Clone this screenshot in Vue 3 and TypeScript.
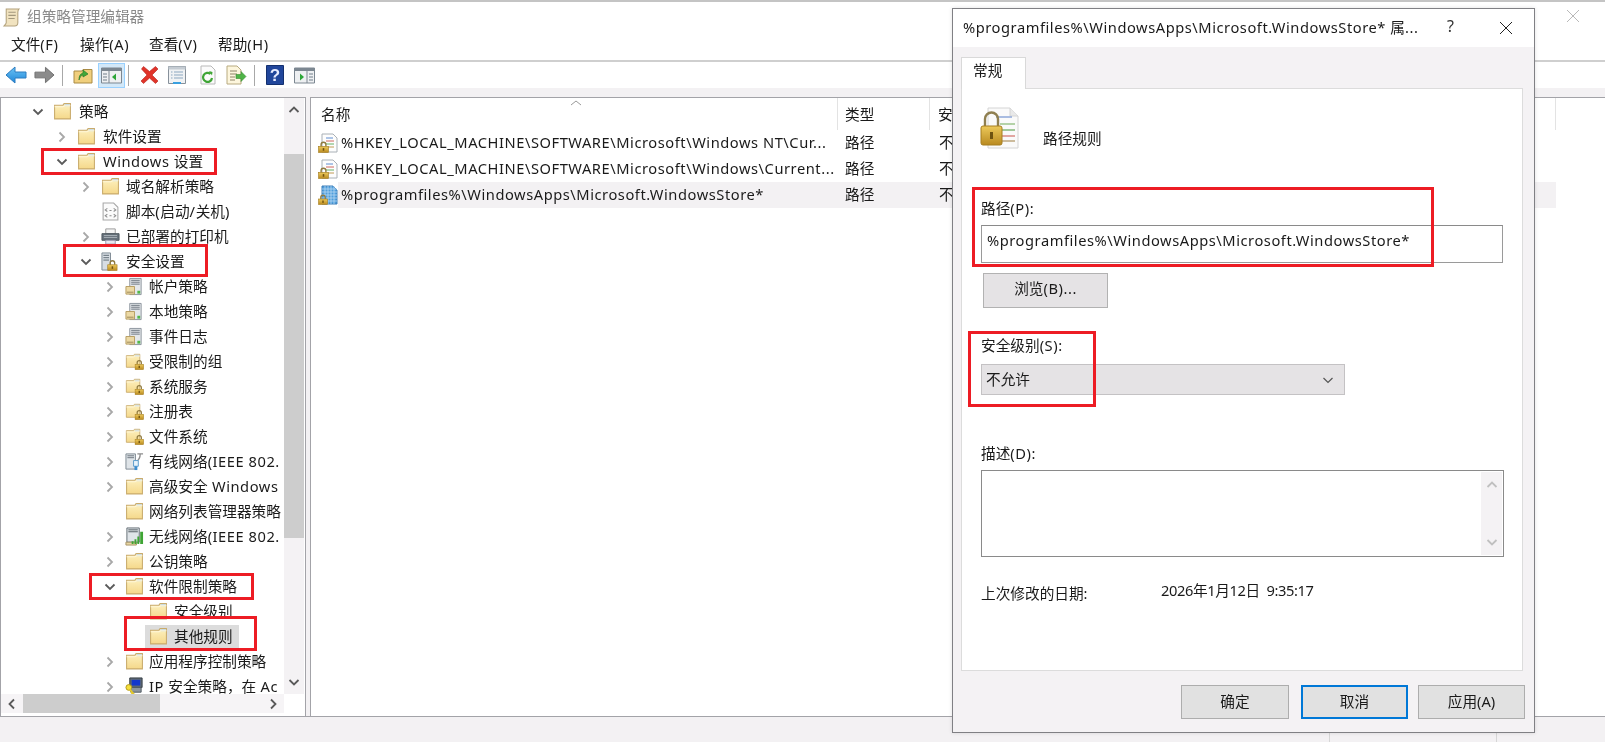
<script setup lang="ts">
interface Row { label: string; level: number; chev: 'r' | 'd' | ''; icon: string; selected?: boolean }
const tree: Row[] = [
  { label: '策略', level: 0, chev: 'd', icon: 'folder' },
  { label: '软件设置', level: 1, chev: 'r', icon: 'folder' },
  { label: 'Windows 设置', level: 1, chev: 'd', icon: 'folder' },
  { label: '域名解析策略', level: 2, chev: 'r', icon: 'folder' },
  { label: '脚本(启动/关机)', level: 2, chev: '', icon: 'script' },
  { label: '已部署的打印机', level: 2, chev: 'r', icon: 'printer' },
  { label: '安全设置', level: 2, chev: 'd', icon: 'seclock' },
  { label: '帐户策略', level: 3, chev: 'r', icon: 'server' },
  { label: '本地策略', level: 3, chev: 'r', icon: 'server' },
  { label: '事件日志', level: 3, chev: 'r', icon: 'server' },
  { label: '受限制的组', level: 3, chev: 'r', icon: 'folderlock' },
  { label: '系统服务', level: 3, chev: 'r', icon: 'folderlock' },
  { label: '注册表', level: 3, chev: 'r', icon: 'folderlock' },
  { label: '文件系统', level: 3, chev: 'r', icon: 'folderlock' },
  { label: '有线网络(IEEE 802.', level: 3, chev: 'r', icon: 'wired' },
  { label: '高级安全 Windows', level: 3, chev: 'r', icon: 'folder' },
  { label: '网络列表管理器策略', level: 3, chev: '', icon: 'folder' },
  { label: '无线网络(IEEE 802.', level: 3, chev: 'r', icon: 'wireless' },
  { label: '公钥策略', level: 3, chev: 'r', icon: 'folder' },
  { label: '软件限制策略', level: 3, chev: 'd', icon: 'folder' },
  { label: '安全级别', level: 4, chev: '', icon: 'folder' },
  { label: '其他规则', level: 4, chev: '', icon: 'folder', selected: true },
  { label: '应用程序控制策略', level: 3, chev: 'r', icon: 'folder' },
  { label: 'IP 安全策略，在 Ac', level: 3, chev: 'r', icon: 'ipsec' },
]
const rules = [
  { name: '%HKEY_LOCAL_MACHINE\\SOFTWARE\\Microsoft\\Windows NT\\Cur...', icon: 'doclock', hi: false },
  { name: '%HKEY_LOCAL_MACHINE\\SOFTWARE\\Microsoft\\Windows\\Current...', icon: 'doclock', hi: false },
  { name: '%programfiles%\\WindowsApps\\Microsoft.WindowsStore*', icon: 'gridlock', hi: true },
]
const menus = ['文件(F)', '操作(A)', '查看(V)', '帮助(H)']
const runs = (s: string) => (s.match(/[\x00-\x7f]+|[^\x00-\x7f]+/g) ?? []).map((t) => ({ t, lat: t.charCodeAt(0) < 128 }))
</script>

<template>
  <div class="root">
    <svg class="defs" width="0" height="0">
      <defs>
        <linearGradient id="fg" x1="0" y1="0" x2="0" y2="1"><stop offset="0" stop-color="#fdf1c0" /><stop offset="1" stop-color="#f5d88a" /></linearGradient>
        <linearGradient id="gold" x1="0" y1="0" x2="0" y2="1"><stop offset="0" stop-color="#edc95a" /><stop offset="1" stop-color="#b98a20" /></linearGradient>
        <linearGradient id="blue" x1="0" y1="0" x2="0" y2="1"><stop offset="0" stop-color="#6cc4f5" /><stop offset="1" stop-color="#1f86d8" /></linearGradient>
        <symbol id="folder" viewBox="0 0 18 18">
          <path d="M1.5 3h8l1-1.500h6v14.500h-15z" fill="url(#fg)" stroke="#c9ab6c" />
          <path d="M11 2h5v2h-5z" fill="#c5d9e6" />
          <path d="M1.500 4.500h8l1.500-1h5.500" fill="none" stroke="#fff6d8" />
        </symbol>
        <symbol id="lock" viewBox="0 0 10 11">
          <path d="M2.800 5V3.300a2.200 2.200 0 0 1 4.400 0V5" fill="none" stroke="#8f7a3f" stroke-width="1.300" />
          <rect x=".5" y="5" width="9" height="5.500" fill="url(#gold)" stroke="#a67e20" stroke-width=".6" />
          <rect x="4.300" y="6.500" width="1.400" height="2.400" fill="#6e5210" />
        </symbol>
        <symbol id="folderlock" viewBox="0 0 20 18">
          <use href="#folder" width="17" height="17" />
          <use href="#lock" x="10" y="7" width="10" height="11" />
        </symbol>
        <symbol id="server" viewBox="0 0 20 18">
          <path d="M5 .5h12v17H5z" fill="#e4e7ea" stroke="#8b949c" />
          <path d="M6.500 2.500h9M6.500 4.500h9M6.500 6.500h9" stroke="#69737c" />
          <path d="M1 9h9v8H1z" fill="#ecd9a4" stroke="#b69d62" />
          <path d="M2 15h7" stroke="#9a8655" />
          <rect x="13" y="13.500" width="3" height="3" fill="#52b848" />
        </symbol>
        <symbol id="seclock" viewBox="0 0 20 20">
          <path d="M1 1h9v18H1z" fill="#d7dde3" stroke="#7e8992" />
          <path d="M2.500 3.500h6M2.500 6h6M2.500 8.500h6" stroke="#5d6973" />
          <use href="#lock" x="6" y="8" width="12" height="12" />
        </symbol>
        <symbol id="script" viewBox="0 0 18 18">
          <path d="M2 1h10l4 4v12H2z" fill="#fbfbfb" stroke="#a8a8a8" />
          <path d="M6 6 4 7.500 6 9M12 6l2 1.500L12 9M6 11.500 4 13l2 1.500M12 11.500l2 1.500-2 1.500M8 8h2M8 13h2" fill="none" stroke="#8d8d8d" />
        </symbol>
        <symbol id="printer" viewBox="0 0 20 18">
          <path d="M5 1h10v5H5z" fill="#f4f4f4" stroke="#9a9a9a" />
          <path d="M1 6h18v7H1z" fill="#66707a" stroke="#4f5860" />
          <path d="M3 8h14M3 10h14" stroke="#aab2b9" />
          <path d="M5 13h10v4H5z" fill="#e8e8f0" stroke="#9a9ab0" />
        </symbol>
        <symbol id="wired" viewBox="0 0 20 20">
          <path d="M1 2h10v16H1z" fill="#dfe4e8" stroke="#7e8992" />
          <path d="M2.500 4h7M2.500 6h7" stroke="#69737c" />
          <path d="M13 2h6M16 2c0 3-1 6-4 8" fill="none" stroke="#8d8d8d" stroke-width="1.400" />
          <path d="M9 9h5v6H9z" fill="#e8f3fb" stroke="#5a9bcb" />
          <rect x="10" y="15" width="3" height="4" fill="#3d8ed0" />
        </symbol>
        <symbol id="wireless" viewBox="0 0 20 20">
          <path d="M2 1h13v15H2z" fill="#dfe4e8" stroke="#626b73" />
          <path d="M3.500 3h10M3.500 5h10" stroke="#4f5860" />
          <path d="M1 16h11v3H1z" fill="#e8d6a2" stroke="#a69466" />
          <path d="M7 18h2v-3H7zM10 18h2v-5h-2zM13 18h2v-8h-2zM16 18h3V5h-3z" fill="#3fa535" />
        </symbol>
        <symbol id="ipsec" viewBox="0 0 20 20">
          <path d="M5 1h13v10H5z" fill="#5e6a75" stroke="#333b42" />
          <path d="M7 3h9v6H7z" fill="#1337cc" />
          <path d="M6 11h11v5H6z" fill="#8d969e" stroke="#4f5860" />
          <circle cx="4" cy="11" r="3" fill="#f5df3c" stroke="#b3991d" />
          <path d="m5 13 5 6M8 16l-1.500 1.500" stroke="#e3c82a" stroke-width="2" fill="none" />
        </symbol>
        <symbol id="doclock" viewBox="0 0 20 20">
          <path d="M4 1h11l4 4v14H4z" fill="#fdfdfd" stroke="#a9b0b6" />
          <path d="M8 5h7" stroke="#5f8cd0" /><path d="M8 8h8" stroke="#d0685f" /><path d="M8 11h8" stroke="#66b066" /><path d="M10 14h6" stroke="#c29a55" />
          <use href="#lock" x="0" y="8" width="11" height="12" />
        </symbol>
        <symbol id="gridlock" viewBox="0 0 20 20">
          <path d="M4 1h11l4 4v14H4z" fill="#4f9edc" stroke="#3f7fb8" />
          <path d="M4 4h15M4 7h15M4 10h15M4 13h15M4 16h15M7 1v18M10 1v18M13 1v18M16 1v18" stroke="#b7d8f2" stroke-width=".8" />
          <use href="#lock" x="0" y="9" width="10" height="11" />
        </symbol>
      </defs>
    </svg>

    <div class="titlebar">
      <svg class="t-icon" viewBox="0 0 18 18">
        <path d="M4 1h12c-1 1-1 2-1 3v10c0 2-1 3-3 3H2c1-1 2-2 2-3z" fill="#f1e3c0" stroke="#b3a27c" />
        <path d="M6 4h7M6 7h7M6 10h6" stroke="#a3987d" />
      </svg>
      <span class="t-text">组策略管理编辑器</span>
    </div>
    <div class="menubar">
      <span v-for="m in menus" :key="m" class="menu">
        <span v-for="(p, i) in runs(m)" :key="i" :class="{ lat: p.lat }">{{ p.t }}</span>
      </span>
    </div>
    <div class="toolbar">
      <svg class="tb a" viewBox="0 0 22 18"><path d="M1 9 10 1v5h11v6H10v5z" fill="url(#blue)" stroke="#2d7cc0" /></svg>
      <svg class="tb b" viewBox="0 0 22 18"><path d="M21 9 12 1v5H1v6h11v5z" fill="#8b8b8b" stroke="#6f6f6f" /></svg>
      <i class="sep c" />
      <svg class="tb d" viewBox="0 0 20 20"><path d="M1 6h8l1-1.500h9V18H1z" fill="#f0cf7d" stroke="#a98a45" /><path d="M6 15c0-4 1-6 4-7V5l5 4-5 3V10c-2 .5-3 2-4 5z" fill="#41a83a" stroke="#2f7d2a" stroke-width=".7" /></svg>
      <span class="tb-active">
        <svg viewBox="0 0 21 18"><path d="M.5 2h20v15H.5z" fill="#eef0f2" stroke="#7c8791" /><path d="M.5 2h20v3H.5z" fill="#7c8791" /><path d="M8 5v12" stroke="#7c8791" /><path d="M2 8h4M2 11h4M2 14h4" stroke="#9aa4ad" stroke-width="1.500" /><path d="m15 7.500-4 3.500 4 3.500z" fill="#2da638" /></svg>
      </span>
      <i class="sep e" />
      <svg class="tb f" viewBox="0 0 20 20"><path d="m2 4 2-2.500 6 5 6-5 2.500 2.500-6 6 6 6-2.500 2.500-6-5.500-6 5.500L1.500 16l6-6z" fill="#e0342a" stroke="#b51f18" stroke-width=".6" /></svg>
      <svg class="tb g" viewBox="0 0 20 20"><path d="M1.500 1.500h17v17h-17z" fill="#f0f2f4" stroke="#87919b" /><path d="M1.500 1.500h17v3h-17z" fill="#c5ccd3" /><path d="M7 7h9M7 10h9M7 13h9M4 7h1.500M4 10h1.500M4 13h1.500" stroke="#8ba7c0" /><path d="M6 18h8" stroke="#3aa0df" stroke-width="2" /></svg>
      <svg class="tb h" viewBox="0 0 18 20"><path d="M2 1h10l4 4v14H2z" fill="#fbfbfb" stroke="#b9b9b9" /><path d="M13 13a4.500 4.500 0 1 1-1.500-4" fill="none" stroke="#3fa535" stroke-width="2.200" /><path d="m10 6 3.500 1-.5 3.500z" fill="#3fa535" /></svg>
      <svg class="tb i" viewBox="0 0 22 20"><path d="M2 1h10l4 4v14H2z" fill="#fdf6dd" stroke="#b8aa80" /><path d="M5 6h7M5 9h7M5 12h5M5 15h5" stroke="#8f8468" /><path d="M11 9.500h5V6.500l5 5-5 5v-3h-5z" fill="#4fb447" stroke="#3a8a34" stroke-width=".6" /></svg>
      <i class="sep j" />
      <svg class="tb k" viewBox="0 0 18 20"><path d="M.5.500h17v19H.5z" fill="#21469b" stroke="#14306f" /><text x="9" y="16" text-anchor="middle" class="q">?</text></svg>
      <svg class="tb l" viewBox="0 0 21 18"><path d="M.5 2h20v15H.5z" fill="#eef0f2" stroke="#7c8791" /><path d="M.5 2h20v3H.5z" fill="#7c8791" /><path d="M13 5v12" stroke="#7c8791" /><path d="M15 8h4M15 11h4M15 14h4" stroke="#9aa4ad" stroke-width="1.500" /><path d="m6 7.500 4 3.500-4 3.500z" fill="#2da638" /></svg>
    </div>

    <div class="content">
      <div class="left">
        <div class="left-top">
          <div class="tree">
            <div v-for="r in tree" :key="r.label" class="row" :class="'lv' + r.level">
              <span class="chev">
                <svg v-if="r.chev === 'd'" viewBox="0 0 12 12"><path d="m1.500 3.500 4.500 4.500 4.500-4.500" class="c-dark" /></svg>
                <svg v-else-if="r.chev === 'r'" viewBox="0 0 12 12"><path d="m3.500 1.500 4.500 4.500-4.500 4.500" class="c-light" /></svg>
              </span>
              <span class="item" :class="{ sel: r.selected }">
                <svg class="ic"><use :href="'#' + r.icon" /></svg>
                <span class="lab"><span v-for="(p, i) in runs(r.label)" :key="i" :class="{ lat: p.lat }">{{ p.t }}</span></span>
              </span>
            </div>
          </div>
          <div class="vscroll">
            <span class="sb-btn"><svg viewBox="0 0 12 12"><path d="m1.500 8 4.500-4.500 4.500 4.500" class="c-dark" /></svg></span>
            <span class="v-thumb" />
            <span class="grow" />
            <span class="sb-btn"><svg viewBox="0 0 12 12"><path d="m1.500 4 4.500 4.500 4.500-4.500" class="c-dark" /></svg></span>
          </div>
        </div>
        <div class="hscroll">
          <span class="h-btn"><svg viewBox="0 0 12 12"><path d="m8 1.500-4.500 4.500 4.500 4.500" class="c-dark" /></svg></span>
          <span class="h-thumb" />
          <span class="grow" />
          <span class="h-btn"><svg viewBox="0 0 12 12"><path d="m4 1.500 4.500 4.500-4.500 4.500" class="c-dark" /></svg></span>
        </div>
      </div>

      <div class="right">
        <div class="r-head">
          <span class="col col1">名称
            <svg class="caret" viewBox="0 0 12 6"><path d="m1 5 5-4 5 4" fill="none" stroke="#9a9a9a" /></svg>
          </span>
          <span class="col col2">类型</span>
          <span class="col col3">安</span>
        </div>
        <div v-for="r in rules" :key="r.name" class="r-row">
          <svg class="ric"><use :href="'#' + r.icon" /></svg>
          <div class="r-cells" :class="{ hi: r.hi }">
            <span class="cell c1 lat">{{ r.name }}</span>
            <span class="cell c2">路径</span>
            <span class="cell c3">不</span>
          </div>
        </div>
      </div>
    </div>

    <div class="status">
      <span class="s1" /><span class="s2" /><span class="s3" />
    </div>

    <svg class="bg-x" viewBox="0 0 14 14"><path d="m1 1 12 12M13 1 1 13" stroke="#b9b9b9" fill="none" /></svg>

    <div class="dialog">
      <div class="d-title">
        <span class="d-t-text"><span class="lat">%programfiles%\WindowsApps\Microsoft.WindowsStore* </span>属<span class="lat">...</span></span>
        <span class="d-help">?</span>
        <svg class="d-x" viewBox="0 0 14 14"><path d="m1 1 12 12M13 1 1 13" stroke="#222" fill="none" /></svg>
      </div>
      <div class="d-tabs"><span class="d-tab">常规</span></div>
      <div class="d-panel">
        <div class="d-head">
          <svg class="d-ic" viewBox="0 0 40 42">
            <path d="M8 1h22l8 8v32H8z" fill="#fafafa" stroke="#d4d4d4" />
            <path d="M30 1v8h8" fill="#e9e9e9" stroke="#d4d4d4" />
            <path d="M16 10h16" stroke="#8ea7d8" stroke-width="1.500" />
            <path d="M20 17h15" stroke="#9cc48c" stroke-width="1.500" />
            <path d="M20 23h15" stroke="#84b77a" stroke-width="1.500" />
            <path d="M20 29h15" stroke="#d98a84" stroke-width="1.500" />
            <path d="M20 34h15" stroke="#bda67c" stroke-width="1.500" />
            <path d="M5 20v-8a6.500 6.500 0 0 1 13 0v8" fill="none" stroke="#8f7f50" stroke-width="2.400" />
            <rect x="1" y="19" width="21" height="19" rx="2" fill="url(#gold)" stroke="#a67e20" />
            <rect x="10" y="25" width="3" height="7" fill="#6e5210" />
          </svg>
          <span class="d-h-text">路径规则</span>
        </div>
        <label class="lb l1">路径<span class="lat">(P):</span></label>
        <div class="input lat">%programfiles%\WindowsApps\Microsoft.WindowsStore*</div>
        <div class="btn browse"><span>浏览<span class="lat">(B)...</span></span></div>
        <label class="lb l2">安全级别<span class="lat">(S):</span></label>
        <div class="select">
          <span class="s-text">不允许</span>
          <svg viewBox="0 0 12 12"><path d="m1.500 4 4.500 4.500 4.500-4.500" fill="none" stroke="#555" stroke-width="1.200" /></svg>
        </div>
        <label class="lb l3">描述<span class="lat">(D):</span></label>
        <div class="textarea">
          <div class="ta-sb">
            <svg viewBox="0 0 12 12"><path d="m1.500 8 4.500-4.500 4.500 4.500" fill="none" stroke="#c0c0c0" stroke-width="1.800" /></svg>
            <svg viewBox="0 0 12 12"><path d="m1.500 4 4.500 4.500 4.500-4.500" fill="none" stroke="#c0c0c0" stroke-width="1.800" /></svg>
          </div>
        </div>
        <div class="date"><span class="date-l">上次修改的日期:</span><span class="date-v">2026年1月12日&nbsp;&nbsp;9:35:17</span></div>
      </div>
      <div class="d-foot">
        <span class="btn fbtn">确定</span>
        <span class="btn fbtn cancel">取消</span>
        <span class="btn fbtn apply">应用(A)</span>
      </div>
    </div>

    <i class="red ra" /><i class="red rb" /><i class="red rc" /><i class="red rd" /><i class="red re" /><i class="red rf" />
  </div>
</template>

<style>
html, body { margin: 0; background: #fff; overflow: hidden; }
</style>

<style scoped>
.root {
  position: relative; width: 1605px; height: 742px; overflow: hidden; background: #fff; color: #1a1a1a;
  display: flex; flex-direction: column; box-sizing: border-box; border-top: 2px solid #c4c4c4;
  font: 14.67px/20px "Noto Sans", "Noto Sans CJK SC", sans-serif;
  filter: blur(0.35px);
}
.lat { letter-spacing: 0.55px; }
.defs { position: absolute; }
.titlebar { height: 31px; display: flex; align-items: center; padding-left: 2px; }
.t-icon { width: 19px; height: 19px; margin-right: 6px; }
.t-text { color: #8a8a8a; padding-bottom: 4px; }
.menubar { height: 27px; display: flex; align-items: center; padding-left: 11px; border-bottom: 2px solid #cfcfcf; box-sizing: content-box; }
.menu { width: 69px; padding-bottom: 5px; }
.toolbar { height: 26px; position: relative; flex: none; display: flex; align-items: center; }
.tb { flex: none; height: 20px; }
.a { width: 22px; margin-left: 5px; }
.b { width: 21px; margin-left: 7px; }
.sep { flex: none; width: 1px; height: 21px; background: #a8a8a8; }
.c { margin-left: 7px; }
.d { width: 20px; margin-left: 10px; }
.tb-active { flex: none; width: 27px; height: 25px; margin-left: 5px; background: #d3e8f8; border: 1px solid #99d1ff; box-sizing: border-box; display: flex; align-items: center; justify-content: center; }
.tb-active svg { width: 21px; height: 18px; }
.e { margin-left: 3px; }
.f { width: 21px; margin-left: 10px; }
.g { width: 20px; margin-left: 7px; }
.h { width: 18px; margin-left: 12px; }
.i { width: 22px; margin-left: 8px; }
.j { margin-left: 7px; }
.k { width: 18px; margin-left: 11px; }
.l { width: 21px; margin-left: 10px; height: 18px; }
.q { font: bold 17px "Liberation Sans", sans-serif; fill: #e8ecff; }

.content { flex: 1; min-height: 0; display: flex; gap: 4px; background: #f3f1f3; padding-top: 9px; }
.left { width: 306px; flex: none; box-sizing: border-box; background: #fff; border: 1px solid #a3a3a8; border-bottom: 0; display: flex; flex-direction: column; }
.left-top { height: 596px; display: flex; flex: none; }
.tree { width: 283px; flex: none; overflow: hidden; padding-top: 1px; box-sizing: border-box; }
.row { height: 25px; display: flex; align-items: center; white-space: nowrap; }
.lv0 { padding-left: 29px; }
.lv1 { padding-left: 53px; }
.lv2 { padding-left: 77px; }
.lv3 { padding-left: 101px; }
.lv4 { padding-left: 125px; }
.chev { width: 23px; flex: none; display: flex; align-items: center; padding-left: 2px; box-sizing: border-box; }
.chev svg { width: 12px; height: 12px; }
.c-dark { fill: none; stroke: #5a5a5a; stroke-width: 1.800; }
.c-light { fill: none; stroke: #a8a8a8; stroke-width: 1.800; }
.item { display: flex; align-items: center; height: 24px; padding-right: 6px; }
.item.sel { background: #dcdcdc; margin-left: -4px; padding-left: 4px; }
.ic { width: 19px; height: 19px; flex: none; margin-right: 7px; }
.lv2 .ic, .lv4 .ic { margin-right: 6px; }
.lv3 .ic { margin-right: 5px; }
.lab { padding-bottom: 2px; }
.vscroll { width: 20px; background: #f4f2f4; display: flex; flex-direction: column; }
.sb-btn { height: 24px; flex: none; display: flex; align-items: center; justify-content: center; }
.sb-btn svg { width: 12px; height: 12px; }
.v-thumb { height: 384px; flex: none; margin-top: 32px; background: #cdcdcd; }
.grow { flex: 1; }
.hscroll { height: 19px; width: 283px; flex: none; display: flex; align-items: center; background: #f6f4f6; }
.h-btn { width: 22px; flex: none; display: flex; justify-content: center; }
.h-btn svg { width: 12px; height: 12px; }
.h-thumb { width: 137px; height: 19px; background: #cdcdcd; }

.right { flex: 1; background: #fff; border: 1px solid #a3a3a8; border-width: 1px 0 0 1px; }
.r-head { height: 32px; display: flex; align-items: center; }
.col { height: 100%; display: flex; align-items: center; box-sizing: border-box; border-right: 1px solid #e3e3e3; padding-left: 10px; position: relative; }
.col1 { width: 527px; }
.col2 { width: 92px; padding-left: 7px; }
.col3 { width: 626px; padding-left: 8px; }
.caret { position: absolute; left: 259px; top: 2px; width: 12px; height: 6px; }
.r-row { height: 26px; display: flex; align-items: center; padding-left: 7px; }
.ric { width: 20px; height: 20px; flex: none; }
.r-cells { flex: 1; display: flex; height: 100%; align-items: center; padding-left: 3px; }
.r-cells.hi { background: #f3f1f3; margin-right: 49px; }
.cell { white-space: nowrap; overflow: hidden; flex: none; padding-bottom: 2px; }
.c1 { width: 504px; }
.c2 { width: 94px; }

.status { height: 26px; flex: none; display: flex; background: #f3f1f3; border-top: 1px solid #a3a3a8; box-sizing: border-box; }
.s1 { width: 1329px; flex: none; }
.s2 { width: 166px; flex: none; border-left: 1px solid #d6d6d6; }
.s3 { flex: 1; border-left: 1px solid #d6d6d6; }
.bg-x { position: absolute; left: 1566px; top: 7px; width: 14px; height: 14px; }

.dialog { position: absolute; left: 952px; top: 6px; width: 583px; height: 725px; box-sizing: border-box; background: #f4f2f4; border: 1px solid #808084; display: flex; flex-direction: column; box-shadow: 0 0 4px rgba(0,0,0,.12); }
.d-title { height: 38px; flex: none; background: #fff; display: flex; align-items: center; padding-left: 10px; }
.d-t-text { width: 484px; white-space: nowrap; overflow: hidden; padding-bottom: 2px; box-sizing: border-box; }
.d-help { width: 52px; font-size: 16px; color: #333; padding-bottom: 4px; }
.d-x { width: 14px; height: 14px; }
.d-tabs { height: 31px; flex: none; margin-top: 10px; padding-left: 8px; display: flex; }
.d-tab { width: 65px; box-sizing: border-box; background: #fff; border: 1px solid #d9d9d9; border-bottom: 0; padding: 2px 0 0 11px; position: relative; z-index: 1; height: 32px; }
.d-panel { height: 583px; width: 562px; box-sizing: border-box; flex: none; margin-left: 8px; background: #fff; border: 1px solid #dcdcdc; padding-left: 19px; display: flex; flex-direction: column; }
.d-head { height: 42px; margin-top: 18px; display: flex; margin-left: -1px; flex: none; }
.d-ic { width: 40px; height: 42px; }
.d-h-text { margin-left: 23px; margin-top: 21px; }
.lb { display: block; height: 20px; flex: none; }
.l1 { margin-top: 49px; }
.input { width: 522px; height: 38px; flex: none; margin-top: 7px; box-sizing: border-box; border: 1px solid #9a9a9a; border-top-color: #8a8a8a; padding: 4px 0 0 5px; white-space: nowrap; }
.btn { display: flex; align-items: center; justify-content: center; box-sizing: border-box; background: #e5e3e5; border: 1px solid #b2b2b2; flex: none; padding-bottom: 2px; }
.browse { width: 125px; height: 35px; margin: 10px 0 0 2px; padding-bottom: 5px; }
.l2 { margin-top: 27px; }
.select { width: 364px; height: 31px; flex: none; margin-top: 9px; box-sizing: border-box; background: #e5e3e5; border: 1px solid #c4c2c4; display: flex; align-items: center; justify-content: space-between; padding: 0 10px 0 4px; }
.s-text { padding-bottom: 2px; }
.select svg { width: 12px; height: 12px; }
.l3 { margin-top: 48px; }
.textarea { width: 523px; height: 87px; flex: none; margin-top: 7px; box-sizing: border-box; border: 1px solid #8a8a8a; display: flex; justify-content: flex-end; padding: 1px; }
.ta-sb { width: 21px; background: #f4f2f4; display: flex; flex-direction: column; justify-content: space-between; align-items: center; padding: 7px 0; box-sizing: border-box; }
.ta-sb svg { width: 12px; height: 12px; }
.date { margin-top: 25px; display: flex; height: 20px; flex: none; }
.date-l { width: 180px; flex: none; margin-top: 1px; }
.date-v { margin-top: -2px; letter-spacing: -0.4px; }
.d-foot { display: flex; justify-content: flex-end; padding-right: 9px; margin-top: 14px; }
.fbtn { width: 108px; height: 34px; background: #e1e1e1; border-color: #adadad; }
.cancel { border: 2px solid #0078d7; margin-left: 12px; width: 107px; }
.apply { margin-left: 10px; width: 107px; }

.red { position: absolute; box-sizing: border-box; border: 3px solid #ed1c24; }
.ra { left: 41px; top: 146px; width: 176px; height: 27px; }
.rb { left: 63px; top: 242px; width: 145px; height: 33px; }
.rc { left: 89px; top: 571px; width: 165px; height: 27px; }
.rd { left: 124px; top: 614px; width: 133px; height: 35px; }
.re { left: 972px; top: 185px; width: 462px; height: 80px; }
.rf { left: 968px; top: 329px; width: 128px; height: 76px; }
</style>
